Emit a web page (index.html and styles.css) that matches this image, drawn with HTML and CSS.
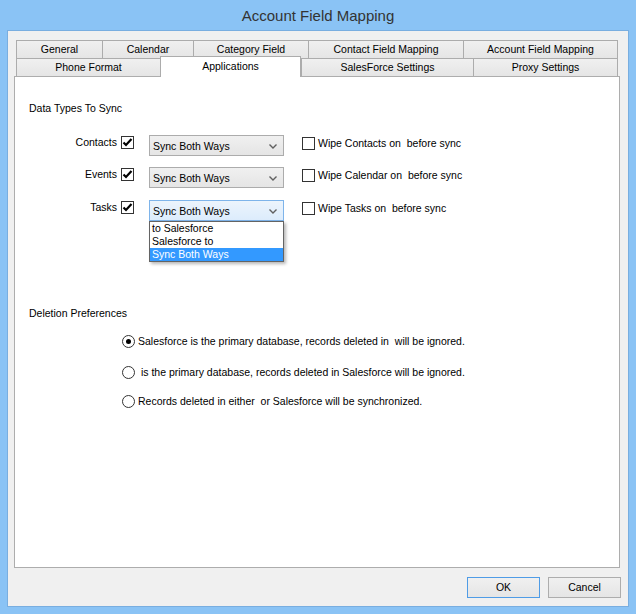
FILE: index.html
```html
<!DOCTYPE html>
<html>
<head>
<meta charset="utf-8">
<link rel="stylesheet" href="styles.css">
</head>
<body>
<div class="window">
  <div class="titlebar">Account Field Mapping</div>
  <div class="client">
    <div class="tabctl">
      <div class="tabrow">
        <div class="tab w86">General</div>
        <div class="tab w91">Calendar</div>
        <div class="tab w115">Category Field</div>
        <div class="tab w155">Contact Field Mapping</div>
        <div class="tab w155 last">Account Field Mapping</div>
      </div>
      <div class="tabrow row2">
        <div class="tab w144">Phone Format</div>
        <div class="tab w141 selected">Applications</div>
        <div class="tab w173">SalesForce Settings</div>
        <div class="tab w145 last">Proxy Settings</div>
      </div>
      <div class="panel">
        <div class="group-title">Data Types To Sync</div>
        <div class="sync-rows">
          <div class="sync-row">
            <div class="row-label">Contacts</div>
            <span class="check checked"><svg width="11" height="11" viewBox="0 0 11 11"><polyline points="1.5,5.5 4,8 9.5,2" fill="none" stroke="#000" stroke-width="2.2"/></svg></span>
            <div class="combo"><span class="combo-text">Sync Both Ways</span><svg class="arrow" width="8" height="5" viewBox="0 0 8 5"><polyline points="0.5,0.5 4,4 7.5,0.5" fill="none" stroke="#606060" stroke-width="1.4"/></svg></div>
            <span class="check wipe"></span>
            <div class="wipe-text">Wipe Contacts on  before sync</div>
          </div>
          <div class="sync-row">
            <div class="row-label">Events</div>
            <span class="check checked"><svg width="11" height="11" viewBox="0 0 11 11"><polyline points="1.5,5.5 4,8 9.5,2" fill="none" stroke="#000" stroke-width="2.2"/></svg></span>
            <div class="combo"><span class="combo-text">Sync Both Ways</span><svg class="arrow" width="8" height="5" viewBox="0 0 8 5"><polyline points="0.5,0.5 4,4 7.5,0.5" fill="none" stroke="#606060" stroke-width="1.4"/></svg></div>
            <span class="check wipe"></span>
            <div class="wipe-text">Wipe Calendar on  before sync</div>
          </div>
          <div class="sync-row">
            <div class="row-label">Tasks</div>
            <span class="check checked"><svg width="11" height="11" viewBox="0 0 11 11"><polyline points="1.5,5.5 4,8 9.5,2" fill="none" stroke="#000" stroke-width="2.2"/></svg></span>
            <div class="combo open"><span class="combo-text">Sync Both Ways</span><svg class="arrow" width="8" height="5" viewBox="0 0 8 5"><polyline points="0.5,0.5 4,4 7.5,0.5" fill="none" stroke="#606060" stroke-width="1.4"/></svg>
              <div class="dropdown">
                <div class="opt">to Salesforce</div>
                <div class="opt">Salesforce to</div>
                <div class="opt hl">Sync Both Ways</div>
              </div>
            </div>
            <span class="check wipe"></span>
            <div class="wipe-text">Wipe Tasks on  before sync</div>
          </div>
        </div>
        <div class="group-title deletion">Deletion Preferences</div>
        <div class="radio-row first"><span class="radio on"></span><span class="radio-text">Salesforce is the primary database, records deleted in  will be ignored.</span></div>
        <div class="radio-row second"><span class="radio"></span><span class="radio-text"> is the primary database, records deleted in Salesforce will be ignored.</span></div>
        <div class="radio-row third"><span class="radio"></span><span class="radio-text">Records deleted in either  or Salesforce will be synchronized.</span></div>
      </div>
    </div>
    <div class="buttons">
      <div class="btn default">OK</div>
      <div class="btn">Cancel</div>
    </div>
  </div>
</div>
</body>
</html>
```
FILE: styles.css
```css
* { box-sizing: border-box; }
html, body { margin: 0; padding: 0; }
body {
  width: 636px; height: 614px; overflow: hidden;
  font-family: "Liberation Sans", Arial, sans-serif;
  font-size: 10.5px; color: #000;
}
.window {
  width: 636px; height: 614px;
  background: #8ac3f5;
  padding: 0 7px 7px 7px;
}
.titlebar {
  height: 30px; line-height: 31px; text-align: center;
  font-size: 15px; color: #333;
  font-family: "Liberation Sans", Arial, sans-serif;
}
.client {
  height: 577px;
  border: 1px solid #79aee0;
  background: #f0f0f0;
  padding: 9px 0 0 6px;
}
.tabctl { width: 606px; }
.tabrow { display: flex; height: 18px; padding-left: 2px; }
.tab {
  height: 18px; line-height: 17px; text-align: center; white-space: nowrap;
  border-top: 1px solid #acacac; border-left: 1px solid #acacac;
  background: linear-gradient(#f0f0f0, #e5e5e5);
}
.tab.last { border-right: 1px solid #acacac; }
.w86 { width: 86px; } .w91 { width: 91px; } .w115 { width: 115px; }
.w155 { width: 155px; } .w144 { width: 144px; } .w141 { width: 141px; }
.w173 { width: 172px; } .w145 { width: 145px; }
.tab.selected {
  position: relative; z-index: 1;
  height: 21px; margin-top: -2px; line-height: 18px;
  background: #fff; border-right: 1px solid #acacac;
}
.panel {
  position: relative;
  height: 492px;
  border: 1px solid #adadad;
  background: #fff;
  padding: 24px 0 0 14px;
}
.group-title { line-height: 14px; height: 14px; white-space: pre; }
.sync-rows { margin-top: 20px; }
.sync-row { display: flex; align-items: flex-start; height: 21px; margin-bottom: 11px; }
.sync-row:nth-child(2) { margin-bottom: 12px; }
.row-label { width: 88px; text-align: right; line-height: 13px; padding-top: 1px; }
.check {
  display: inline-flex; align-items: center; justify-content: center;
  width: 13px; height: 13px; border: 1px solid #333; background: #fff;
  margin-left: 4px; margin-top: 1px; flex: none;
}
.check.wipe { margin-left: 18px; margin-top: 2px; }
.wipe-text { margin-left: 3px; line-height: 13px; padding-top: 2px; white-space: pre; }
.combo {
  position: relative;
  width: 135px; height: 21px; margin-left: 15px; flex: none;
  border: 1px solid #acacac;
  background: linear-gradient(#f0f0f0, #e5e5e5);
  display: flex; align-items: center; justify-content: space-between;
  padding: 1px 6px 0 3px;
}
.combo.open {
  border-color: #7eb4ea;
  background: linear-gradient(#ecf4fc, #dcecfc);
}
.combo-text { white-space: nowrap; }
.arrow { display: block; }
.dropdown {
  position: absolute; left: -1px; top: 20px; width: 135px;
  border: 1px solid #646464; background: #fff;
  box-shadow: 2px 2px 3px rgba(0,0,0,0.28);
  z-index: 2;
}
.opt { height: 13px; line-height: 13px; padding-left: 2px; white-space: nowrap; }
.opt.hl { background: #3399ff; color: #fff; }
.deletion { margin-top: 85px; }
.radio-row { display: flex; align-items: center; height: 13px; padding-left: 93px; }
.radio-row.first { margin-top: 15px; }
.radio-row.second { margin-top: 18px; }
.radio-row.third { margin-top: 16px; }
.radio {
  width: 13px; height: 13px; border-radius: 50%;
  border: 1px solid #333; background: #fff; flex: none;
  display: flex; align-items: center; justify-content: center;
}
.radio.on::after {
  content: ""; width: 5px; height: 5px; border-radius: 50%; background: #000;
}
.radio-text { margin-left: 3px; white-space: pre; line-height: 13px; }
.buttons {
  display: flex; justify-content: flex-end; gap: 8px;
  padding-right: 7px; margin-top: 9px;
}
.btn {
  width: 73px; height: 21px; line-height: 19px; text-align: center;
  border: 1px solid #adadad;
  background: linear-gradient(#f0f0f0, #e5e5e5);
}
.btn.default { border-color: #4f9ce6; }
```
